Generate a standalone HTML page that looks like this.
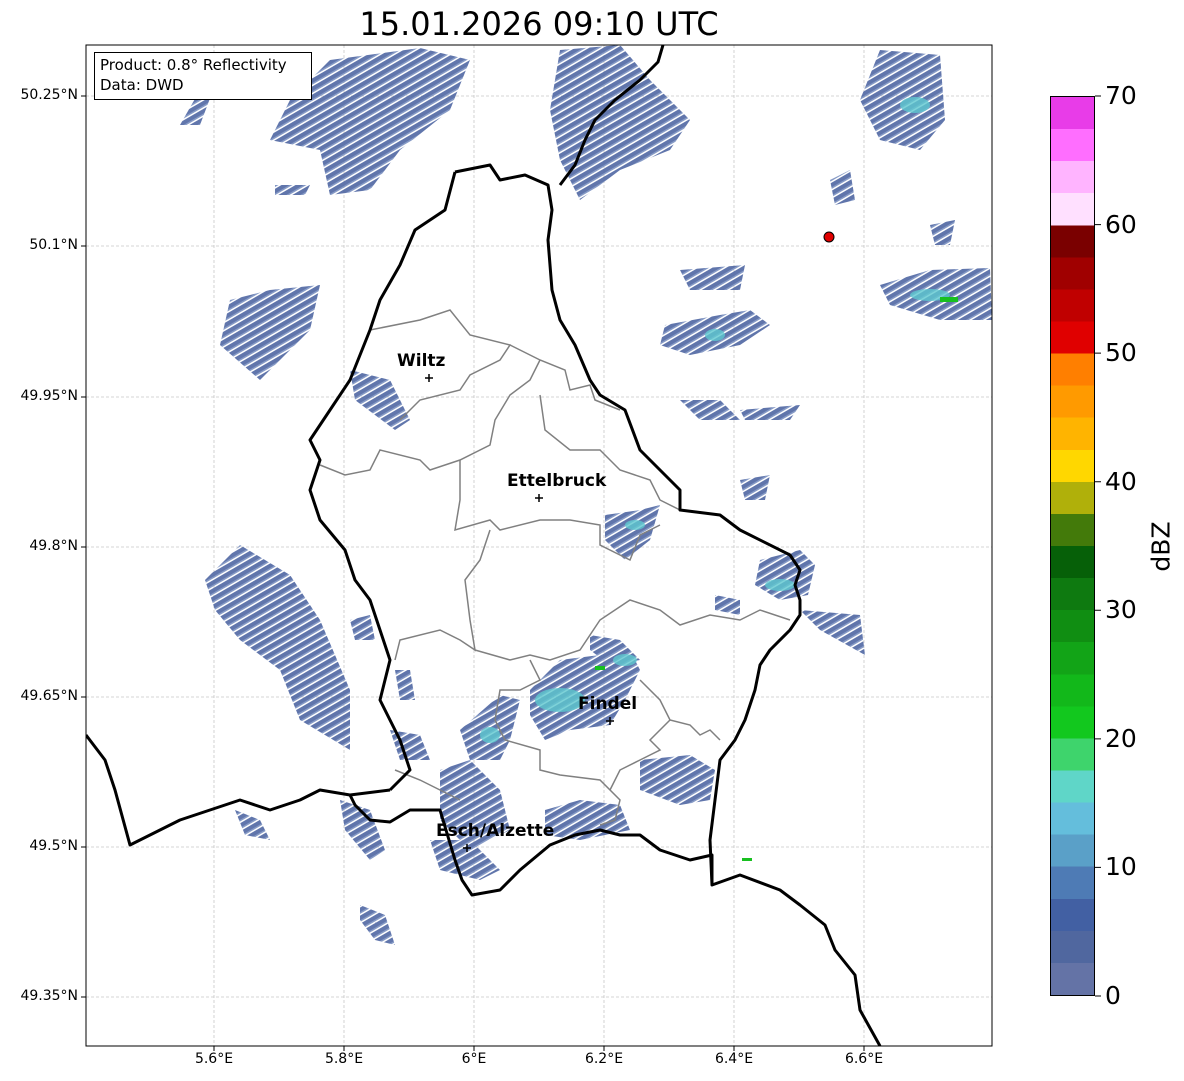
<!DOCTYPE html>
<html><head><meta charset="utf-8"><style>
body{margin:0;width:1184px;height:1081px;background:#fff;position:relative;font-family:"DejaVu Sans","Liberation Sans",sans-serif;overflow:hidden}
.t{position:absolute;white-space:nowrap}
.yl{position:absolute;right:1106px;font-size:14px;color:#000}
.xl{position:absolute;top:1051px;font-size:14px;width:80px;text-align:center}
.cb{position:absolute;left:1105px;font-size:25px}
</style></head><body>
<div class="t" style="left:0;width:1078px;text-align:center;top:5px;font-size:32px">15.01.2026 09:10 UTC</div>

<svg style="position:absolute;left:0;top:0" width="1184" height="1081">
<defs>
<pattern id="st" width="7" height="7" patternUnits="userSpaceOnUse" patternTransform="rotate(60)">
<rect width="7" height="7" fill="#fff" opacity="0"/><rect width="4" height="7" fill="#4f67a3"/><rect x="4" width="1.5" height="7" fill="#7a90c0"/>
</pattern>
<clipPath id="cp"><rect x="86" y="45" width="906" height="1001"/></clipPath>
</defs>
<g clip-path="url(#cp)">
<g stroke="#c8c8c8" stroke-width="0.8" stroke-dasharray="3,2">
<line x1="214" y1="45" x2="214" y2="1046"/><line x1="344" y1="45" x2="344" y2="1046"/><line x1="474" y1="45" x2="474" y2="1046"/><line x1="604" y1="45" x2="604" y2="1046"/><line x1="734" y1="45" x2="734" y2="1046"/><line x1="864" y1="45" x2="864" y2="1046"/>
<line x1="86" y1="96" x2="992" y2="96"/><line x1="86" y1="246" x2="992" y2="246"/><line x1="86" y1="397" x2="992" y2="397"/><line x1="86" y1="547" x2="992" y2="547"/><line x1="86" y1="697" x2="992" y2="697"/><line x1="86" y1="847" x2="992" y2="847"/><line x1="86" y1="997" x2="992" y2="997"/>
</g>
<g fill="url(#st)" opacity="0.9">
<path d="M330 60 L420 48 L470 60 L450 110 L400 150 L370 190 L330 195 L320 150 L270 140 L290 100 Z"/>
<path d="M560 50 L620 45 L650 80 L690 120 L670 150 L620 170 L580 200 L560 160 L550 110 Z"/>
<path d="M880 50 L940 55 L945 120 L920 150 L880 140 L860 100 Z"/>
<path d="M830 180 L850 170 L855 200 L835 205 Z"/>
<path d="M880 285 L930 270 L990 268 L992 320 L940 320 L890 305 Z"/>
<path d="M230 300 L270 290 L320 285 L310 330 L260 380 L220 345 Z"/>
<path d="M665 325 L720 315 L750 310 L770 325 L740 345 L690 355 L660 345 Z"/>
<path d="M680 270 L745 265 L740 290 L690 290 Z"/>
<path d="M930 225 L955 220 L950 245 L935 245 Z"/>
<path d="M350 370 L390 380 L410 420 L395 430 L355 400 Z"/>
<path d="M680 400 L720 400 L740 420 L700 420 Z"/>
<path d="M740 410 L800 405 L790 420 L745 420 Z"/>
<path d="M740 480 L770 475 L765 500 L745 500 Z"/>
<path d="M605 515 L640 510 L660 505 L650 540 L625 560 L605 540 Z"/>
<path d="M760 560 L800 550 L815 565 L808 595 L780 600 L755 585 Z"/>
<path d="M800 610 L860 615 L865 655 L820 630 Z"/>
<path d="M715 595 L740 600 L740 615 L715 610 Z"/>
<path d="M205 580 L240 545 L290 575 L320 620 L350 690 L350 750 L300 720 L280 670 L240 640 L215 610 Z"/>
<path d="M350 620 L370 615 L375 640 L355 640 Z"/>
<path d="M395 670 L410 670 L415 700 L400 700 Z"/>
<path d="M390 730 L420 735 L430 760 L400 760 Z"/>
<path d="M530 690 L560 660 L600 655 L630 650 L640 670 L625 700 L610 725 L570 730 L545 740 L530 715 Z"/>
<path d="M590 635 L620 640 L640 660 L610 665 L590 650 Z"/>
<path d="M460 730 L500 695 L520 700 L510 740 L500 760 L470 760 Z"/>
<path d="M440 770 L470 760 L500 790 L510 830 L470 850 L440 820 Z"/>
<path d="M430 840 L470 840 L500 870 L480 880 L440 870 Z"/>
<path d="M545 810 L580 800 L620 805 L630 830 L580 840 L545 835 Z"/>
<path d="M640 760 L690 755 L715 770 L710 800 L680 805 L640 790 Z"/>
<path d="M340 800 L370 810 L385 850 L370 860 L345 830 Z"/>
<path d="M235 810 L260 820 L270 840 L245 835 Z"/>
<path d="M360 905 L385 915 L395 945 L375 940 L360 920 Z"/>
<path d="M200 90 L215 85 L200 125 L180 125 Z"/>
<path d="M275 185 L310 185 L305 195 L275 195 Z"/>
</g>
<g fill="#5ec8cf" opacity="0.8">
<ellipse cx="915" cy="105" rx="15" ry="8"/><ellipse cx="930" cy="295" rx="20" ry="6"/><ellipse cx="560" cy="700" rx="25" ry="12"/><ellipse cx="625" cy="660" rx="12" ry="6"/><ellipse cx="780" cy="585" rx="15" ry="6"/><ellipse cx="635" cy="525" rx="10" ry="5"/><ellipse cx="715" cy="335" rx="10" ry="6"/><ellipse cx="490" cy="735" rx="10" ry="8"/>
</g>
<g fill="#18c020"><rect x="940" y="297" width="18" height="5"/><rect x="742" y="858" width="10" height="3"/><rect x="595" y="666" width="10" height="4"/></g>
<g fill="none" stroke="#808080" stroke-width="1.5">
<path d="M370 330 L420 320 L450 310 L470 335 L510 345 L500 360 L470 375 L460 390 L420 400 L400 420"/>
<path d="M510 345 L540 360 L565 370 L570 390 L590 385 L595 400 L620 410"/>
<path d="M540 360 L530 380 L510 395 L495 420 L490 445 L460 460 L430 470 L420 460 L380 450 L370 470 L345 475 L320 465"/>
<path d="M540 395 L545 430 L570 450 L600 450 L620 470 L650 480 L660 500 L680 510"/>
<path d="M460 460 L460 500 L455 530 L490 520 L500 530 L540 520 L570 520 L600 525 L600 545 L630 560 L640 535 L660 525"/>
<path d="M490 530 L480 560 L465 580 L470 620 L475 650 L460 640 L440 630 L400 640 L395 660"/>
<path d="M475 650 L510 660 L530 655 L550 660 L580 650 L600 620 L630 600 L660 610 L680 625 L710 615 L740 620 L760 610 L790 620"/>
<path d="M530 660 L540 680 L520 690 L500 690 L495 720 L505 740 L540 750 L540 770 L560 775 L600 780 L620 800 L615 820 L600 825"/>
<path d="M640 680 L660 700 L670 720 L690 725 L700 735 L710 730 L720 740"/>
<path d="M670 720 L650 740 L660 750 L640 760 L620 770 L610 790"/>
<path d="M395 770 L420 780 L440 790 L460 800"/>
</g>
<g fill="none" stroke="#000" stroke-width="3" stroke-linejoin="round">
<path d="M455 172 L490 165 L500 180 L525 175 L548 185 L552 210 L548 240 L552 290 L560 320 L575 345 L590 380 L600 395 L625 410 L640 450 L660 470 L680 490 L680 510 L720 515 L740 530 L790 555 L800 570 L795 585 L800 600 L800 615 L790 630 L770 650 L760 665 L755 690 L745 720 L735 740 L720 760 L715 800 L710 840 L712 885"/>
<path d="M455 172 L445 210 L415 230 L400 265 L380 300 L370 330 L350 380 L330 410 L310 440 L320 460 L310 490 L320 520 L345 550 L355 580 L370 600 L390 660 L380 700 L400 740 L410 770 L390 790"/>
<path d="M86 735 L105 760 L115 790 L130 845 L150 835 L180 820 L240 800 L270 810 L300 800 L320 790 L350 795 L390 790"/>
<path d="M350 795 L355 805 L370 820 L390 822 L410 810 L440 810 L455 860 L462 880 L472 895 L500 890 L520 870 L550 845 L575 835 L600 830 L620 835 L640 835 L660 850 L690 860 L712 855 L712 885 L740 875 L780 890 L800 905 L825 925 L835 950 L855 975 L860 1010 L880 1046"/>
<path d="M560 185 L575 165 L585 140 L595 120 L615 100 L640 80 L658 62 L663 45"/>
</g>
</g>
<rect x="86" y="45" width="906" height="1001" fill="none" stroke="#000" stroke-width="1"/>
<circle cx="829" cy="237" r="5" fill="#e00000" stroke="#000" stroke-width="1"/>
<g stroke="#000" stroke-width="1.5">
<path d="M425 378 h8 M429 374 v8"/><path d="M535 498 h8 M539 494 v8"/><path d="M606 721 h8 M610 717 v8"/><path d="M463 848 h8 M467 844 v8"/>
</g>
<g stroke="#000"><path d="M214 1046 v5 M344 1046 v5 M474 1046 v5 M604 1046 v5 M734 1046 v5 M864 1046 v5 M86 96 h-5 M86 246 h-5 M86 397 h-5 M86 547 h-5 M86 697 h-5 M86 847 h-5 M86 997 h-5"/></g>
</svg>

<div class="t" style="left:94px;top:52px;width:218px;height:48px;border:1px solid #000;background:#fff;font-size:15px;line-height:20px;padding:2px 0 0 5px;box-sizing:border-box">Product: 0.8° Reflectivity<br>Data: DWD</div>

<div class="t" style="left:397px;top:351px;font-size:17px;font-weight:bold">Wiltz</div>
<div class="t" style="left:507px;top:471px;font-size:17px;font-weight:bold">Ettelbruck</div>
<div class="t" style="left:578px;top:694px;font-size:17px;font-weight:bold">Findel</div>
<div class="t" style="left:436px;top:821px;font-size:17px;font-weight:bold">Esch/Alzette</div>

<div class="yl" style="top:87px">50.25°N</div>
<div class="yl" style="top:237px">50.1°N</div>
<div class="yl" style="top:388px">49.95°N</div>
<div class="yl" style="top:538px">49.8°N</div>
<div class="yl" style="top:688px">49.65°N</div>
<div class="yl" style="top:838px">49.5°N</div>
<div class="yl" style="top:988px">49.35°N</div>

<div class="xl" style="left:174px">5.6°E</div>
<div class="xl" style="left:304px">5.8°E</div>
<div class="xl" style="left:434px">6°E</div>
<div class="xl" style="left:564px">6.2°E</div>
<div class="xl" style="left:694px">6.4°E</div>
<div class="xl" style="left:824px">6.6°E</div>

<div style="position:absolute;left:1050px;top:96px;width:45px;height:900px;border:1px solid #000;box-sizing:border-box;background:linear-gradient(to top,
#6473a6 0 3.571%,#50679f 0 7.143%,#4260a3 0 10.714%,#4e7bb5 0 14.286%,#5aa0c8 0 17.857%,#64bedc 0 21.429%,#5fd6c8 0 25%,#3ed46c 0 28.571%,#12c81e 0 32.143%,#12b81a 0 35.714%,#12a417 0 39.286%,#108e12 0 42.857%,#0e7a10 0 46.429%,#066008 0 50%,#437a0a 0 53.571%,#b0b00a 0 57.143%,#ffd700 0 60.714%,#ffb400 0 64.286%,#ff9a00 0 67.857%,#ff7f00 0 71.429%,#e00000 0 75%,#c00000 0 78.571%,#a00000 0 82.143%,#7a0000 0 85.714%,#ffe0ff 0 89.286%,#ffb4ff 0 92.857%,#ff6eff 0 96.429%,#e83ce8 0 100%)"></div>
<svg style="position:absolute;left:1095px;top:90px" width="10" height="912"><g stroke="#000"><path d="M0 6h6M0 134.6h6M0 263.1h6M0 391.7h6M0 520.3h6M0 648.9h6M0 777.4h6M0 906h6"/></g></svg>
<div class="cb" style="top:81px">70</div>
<div class="cb" style="top:210px">60</div>
<div class="cb" style="top:338px">50</div>
<div class="cb" style="top:467px">40</div>
<div class="cb" style="top:595px">30</div>
<div class="cb" style="top:724px">20</div>
<div class="cb" style="top:852px">10</div>
<div class="cb" style="top:981px">0</div>
<div class="t" style="left:1136px;top:532px;font-size:25px;transform:rotate(-90deg);transform-origin:center">dBZ</div>
</body></html>
